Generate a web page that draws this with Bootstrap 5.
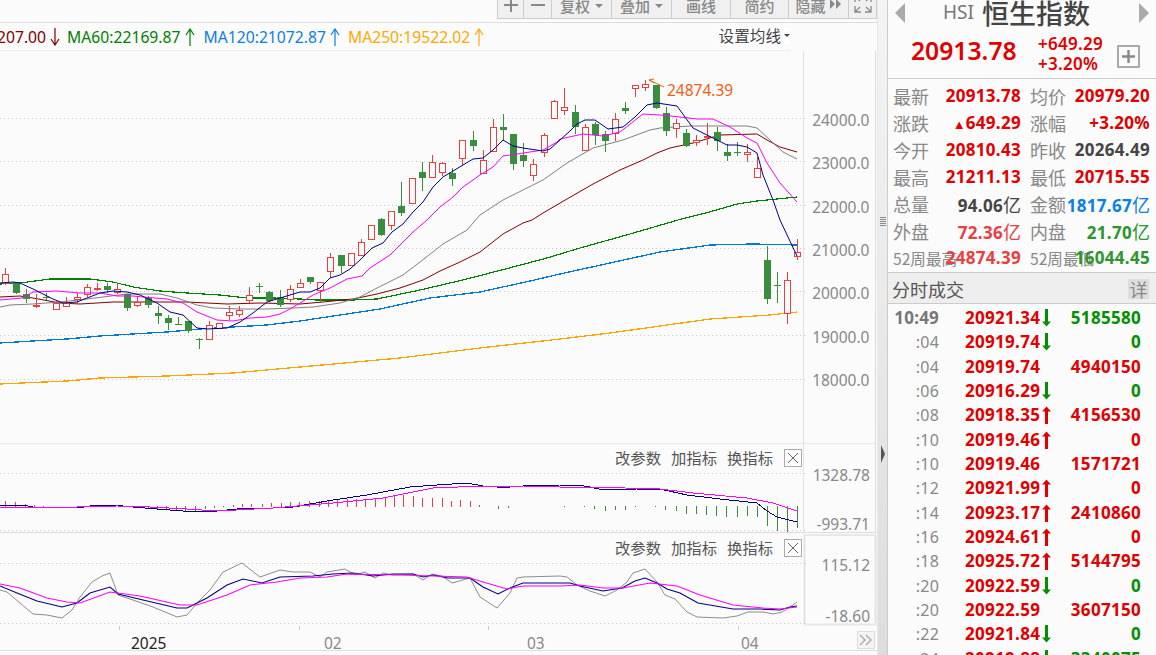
<!DOCTYPE html>
<html lang="zh">
<head>
<meta charset="utf-8">
<title>恒生指数</title>
<link href="https://cdn.jsdelivr.net/npm/bootstrap@5.3.0/dist/css/bootstrap.min.css" rel="stylesheet">
<style>
html,body{height:100%;overflow:hidden;background:#fbfbfb;}
body{font-family:"Noto Sans","Noto Sans CJK SC",sans-serif;font-size:16px;line-height:1;color:#444;}
.app{width:1156px;height:655px;overflow:hidden;}
.leftcol{width:877px;flex:none;height:655px;}
.topbar{height:22.5px;border-bottom:1px solid #ddd;overflow:hidden;align-items:flex-end;justify-content:flex-end;padding-bottom:3px;flex:none;}
.tbtn{height:32px;background:#f0f0f0;border:1px solid #ccc;border-left:0;color:#888;font-family:"Noto Sans CJK SC",sans-serif;font-size:15px;font-weight:500;display:flex;align-items:flex-end;justify-content:center;padding-bottom:5px;flex:none;}
.tbtn:first-child{border-left:1px solid #ccc;}
.caret-s{display:inline-block;border:4px solid transparent;border-top:4px solid #888;border-bottom:0;margin-left:5px;margin-bottom:5px;}
.legendrow{height:28px;width:791px;border-bottom:1px solid #eee;white-space:nowrap;flex:none;position:relative;padding-top:6px;}
.lgd{display:inline-flex;align-items:center;font-size:15.7px;height:17px;}
.lgd svg{margin-left:4px;}
.lgd-a{color:#800000;margin-left:-3px;margin-right:7px;}
.lgd-b{color:#008000;margin-right:9px;}
.lgd-c{color:#0a80e0;margin-right:8px;}
.lgd-d{color:#ffa800;}
.setma{position:absolute;right:1px;top:5px;background:#fff;color:#444;font-family:"Noto Sans CJK SC",sans-serif;font-size:15.6px;padding:0 0 1px;display:flex;align-items:center;}
.setma i{display:inline-block;border:3px solid transparent;border-top:3px solid #444;border-bottom:0;margin-left:3px;}
.pane{position:relative;flex:none;width:877px;}
.pane svg{display:block;}
.pane-main{height:392px;}
.pane-macd{height:90px;}
.pane-kdj{height:93px;}
.pane-axis{height:25px;border-bottom:1px solid #ddd;}
.ptools{position:absolute;top:6px;left:615px;display:flex;align-items:center;gap:10px;font-family:"Noto Sans CJK SC",sans-serif;font-size:15.33px;color:#555;}
.ptools .xbox{width:18px;height:18px;border:1px solid #aaa;margin-left:1px;background:#fdfdfd;display:flex;align-items:center;justify-content:center;}
.morebtn{position:absolute;left:857px;top:5px;width:18px;height:18px;background:#f4f4f4;border:1px solid #ddd;display:flex;align-items:center;justify-content:center;}
.splitter{width:10px;flex:none;height:655px;background:linear-gradient(#f4f4f4,#ddd);border-left:1px solid #e8e8e8;position:relative;}
.grip{position:absolute;left:2px;top:217px;width:6px;height:10px;background:repeating-linear-gradient(#888 0 1px,#eee 1px 2px);}
.tri{position:absolute;left:3px;top:445px;border:9px solid transparent;border-left:4px solid #555;border-right:0;}
.side{width:269px;flex:none;height:655px;border-left:1px solid #ccc;overflow:hidden;}
.sd-head{height:29px;position:relative;padding-left:55px;padding-bottom:4px;align-items:center;}
.sd-head .code{font-size:19px;color:#777;width:39px;}
.sd-head .nm{font-family:"Noto Sans CJK SC",sans-serif;font-size:27px;font-weight:500;color:#444;}
.tl,.tr{position:absolute;top:3px;border:10px solid transparent;}
.tl{left:7px;border-right:10px solid #aaa;border-left:0;}
.tr{left:251px;border-left:10px solid #aaa;border-right:0;}
.quote{height:50px;border-bottom:1px solid #ccc;position:relative;flex:none;}
.bigp{position:absolute;left:23px;top:10px;font-size:24.7px;font-weight:600;color:#e00000;}
.chg{position:absolute;left:150px;top:5px;font-size:17px;font-weight:600;color:#e00000;line-height:20px;letter-spacing:.3px;}
.plusb{position:absolute;left:229px;top:16px;width:23px;height:23px;border:2px solid #aaa;border-radius:1px;display:flex;align-items:center;justify-content:center;}
.stats{height:194px;border-bottom:1px solid #ccc;padding-top:5px;flex:none;}
.strow{height:27px;position:relative;font-family:"Noto Sans CJK SC",sans-serif;}
.lab{position:absolute;top:3px;font-size:18px;color:#888;white-space:nowrap;}
.lab.a1{left:5px;}.lab.a2{left:142px;}
.lab.sm{font-size:15.6px;top:5px;}
.val{position:absolute;top:3px;font-family:"Noto Sans",sans-serif;font-size:17px;font-weight:700;letter-spacing:.3px;white-space:nowrap;text-align:right;}
.val.v1{right:135px;}.val.v2{right:6px;}
.val small{font-family:"Noto Sans CJK SC",sans-serif;font-size:18px;font-weight:400;letter-spacing:0;}
.val .tg{font-size:13px;}
.cr{color:#e00000;}.cd{color:#444;}.cb{color:#0a80e0;}.cs{color:#e84040;}.cg{color:#2c962c;}.cG{color:#009000;}
.fshead{height:31px;background:#eee;border-bottom:1px solid #ccc;flex:none;align-items:center;padding-left:4px;padding-top:1px;position:relative;font-family:"Noto Sans CJK SC",sans-serif;font-size:18px;color:#555;}
.xq{position:absolute;left:240px;top:6px;width:21px;height:20px;background:#ddd;color:#888;font-size:18px;display:flex;align-items:center;justify-content:center;}
.trades{padding-top:2px;}
.trow{height:24.35px;position:relative;font-size:17px;font-weight:700;letter-spacing:.3px;white-space:nowrap;}
.trow .t{position:absolute;right:217px;top:4px;font-size:16px;font-weight:400;color:#888;letter-spacing:.2px;}
.trow .t.b{font-size:17px;font-weight:700;color:#777;top:3px;}
.trow .p{position:absolute;left:77px;top:3px;}
.trow .ar{position:absolute;left:154px;top:3px;}
.trow .v{position:absolute;right:15px;top:3px;}
</style>
</head>
<body>
<svg width="0" height="0" class="position-absolute">
<symbol id="up" viewBox="0 0 9 18"><path d="M4.5 0.5L9 5.5H6V18H3V5.5H0Z" fill="#e00000"/></symbol>
<symbol id="dn" viewBox="0 0 9 18"><path d="M4.5 17.5L9 12.5H6V0H3V12.5H0Z" fill="#009000"/></symbol>
<symbol id="thinup" viewBox="0 0 10 18"><path d="M5 1V18M1 7L5 1L9 7" fill="none" stroke="currentColor" stroke-width="1.2"/></symbol>
<symbol id="thindn" viewBox="0 0 10 18"><path d="M5 0V17M1 11L5 17L9 11" fill="none" stroke="currentColor" stroke-width="1.2"/></symbol>
<symbol id="xmark" viewBox="0 0 12 12"><path d="M1 1L11 11M11 1L1 11" stroke="#666" stroke-width="1"/></symbol>
</svg>
<div class="app d-flex">
  <div class="leftcol d-flex flex-column">
    <div class="topbar d-flex">
      <div class="tbtn" style="width:27px"><svg width="16" height="16" viewBox="0 0 16 16"><path d="M8 1V15M1 8H15" stroke="#888" stroke-width="2"/></svg></div>
      <div class="tbtn" style="width:28px"><svg width="16" height="16" viewBox="0 0 16 16"><path d="M1 8H15" stroke="#888" stroke-width="2"/></svg></div>
      <div class="tbtn" style="width:60px">复权<span class="caret-s"></span></div>
      <div class="tbtn" style="width:60px">叠加<span class="caret-s"></span></div>
      <div class="tbtn" style="width:59px">画线</div>
      <div class="tbtn" style="width:58px">简约</div>
      <div class="tbtn" style="width:60px">隐藏<svg width="12" height="10" viewBox="0 0 12 10" class="ms-1 mb-1"><path d="M0 0L5 5L0 10ZM6 0L11 5L6 10Z" fill="#888"/></svg></div>
      <div class="tbtn" style="width:28px"><svg width="18" height="18" viewBox="0 0 18 18"><path d="M1 7V1H7M11 1H17V7M17 11V17H11M7 17H1V11M1 1L6 6M17 1L12 6M17 17L12 12M1 17L6 12" fill="none" stroke="#888" stroke-width="1.3"/></svg></div>
    </div>
    <div class="legendrow">
      <span class="lgd lgd-a">207.00<svg width="10" height="18"><use href="#thindn"/></svg></span><span class="lgd lgd-b">MA60:22169.87<svg width="10" height="18"><use href="#thinup"/></svg></span><span class="lgd lgd-c">MA120:21072.87<svg width="10" height="18"><use href="#thinup"/></svg></span><span class="lgd lgd-d">MA250:19522.02<svg width="10" height="18"><use href="#thinup"/></svg></span>
      <span class="setma">设置均线<i></i></span>
    </div>
    <div class="pane pane-main" id="pMain"></div>
    <div class="pane pane-macd" id="pMacd">
      <div class="ptools"><span>改参数</span><span>加指标</span><span>换指标</span><span class="xbox"><svg width="12" height="12"><use href="#xmark"/></svg></span></div>
    </div>
    <div class="pane pane-kdj" id="pKdj">
      <div class="ptools"><span>改参数</span><span>加指标</span><span>换指标</span><span class="xbox"><svg width="12" height="12"><use href="#xmark"/></svg></span></div>
    </div>
    <div class="pane pane-axis" id="pAxis">
      <div class="morebtn"><svg width="14" height="12" viewBox="0 0 14 12"><path d="M1 1L6 6L1 11M7 1L12 6L7 11" fill="none" stroke="#aaa" stroke-width="1.4"/></svg></div>
    </div>
  </div>
  <div class="splitter"><span class="grip"></span><span class="tri"></span></div>
  <div class="side d-flex flex-column">
    <div class="sd-head d-flex"><span class="tl"></span><span class="code">HSI</span><span class="nm">恒生指数</span><span class="tr"></span></div>
    <div class="quote">
      <div class="bigp">20913.78</div>
      <div class="chg">+649.29<br>+3.20%</div>
      <div class="plusb"><svg width="15" height="15" viewBox="0 0 15 15"><path d="M7.5 1V14M1 7.5H14" stroke="#888" stroke-width="2.4"/></svg></div>
    </div>
    <div class="stats">
      <div class="strow"><span class="lab a1">最新</span><span class="val v1 cr">20913.78</span><span class="lab a2">均价</span><span class="val v2 cr">20979.20</span></div>
      <div class="strow"><span class="lab a1">涨跌</span><span class="val v1 cr"><span class="tg">▲</span>649.29</span><span class="lab a2">涨幅</span><span class="val v2 cr">+3.20%</span></div>
      <div class="strow"><span class="lab a1">今开</span><span class="val v1 cr">20810.43</span><span class="lab a2">昨收</span><span class="val v2 cd">20264.49</span></div>
      <div class="strow"><span class="lab a1">最高</span><span class="val v1 cr">21211.13</span><span class="lab a2">最低</span><span class="val v2 cr">20715.55</span></div>
      <div class="strow"><span class="lab a1">总量</span><span class="val v1 cd">94.06<small>亿</small></span><span class="lab a2">金额</span><span class="val v2 cb">1817.67<small>亿</small></span></div>
      <div class="strow"><span class="lab a1">外盘</span><span class="val v1 cs">72.36<small>亿</small></span><span class="lab a2">内盘</span><span class="val v2 cg">21.70<small>亿</small></span></div>
      <div class="strow"><span class="lab a1 sm">52周最高</span><span class="val v1 cs">24874.39</span><span class="lab a2 sm">52周最低</span><span class="val v2 cg">16044.45</span></div>
    </div>
    <div class="fshead d-flex">分时成交<span class="xq">详</span></div>
    <div class="trades">
      <div class="trow"><span class="t b">10:49</span><span class="p cr">20921.34</span><svg class="ar" width="9" height="18"><use href="#dn"/></svg><span class="v cG">5185580</span></div>
      <div class="trow"><span class="t">:04</span><span class="p cr">20919.74</span><svg class="ar" width="9" height="18"><use href="#dn"/></svg><span class="v cG">0</span></div>
      <div class="trow"><span class="t">:04</span><span class="p cr">20919.74</span><span class="v cr">4940150</span></div>
      <div class="trow"><span class="t">:06</span><span class="p cr">20916.29</span><svg class="ar" width="9" height="18"><use href="#dn"/></svg><span class="v cG">0</span></div>
      <div class="trow"><span class="t">:08</span><span class="p cr">20918.35</span><svg class="ar" width="9" height="18"><use href="#up"/></svg><span class="v cr">4156530</span></div>
      <div class="trow"><span class="t">:10</span><span class="p cr">20919.46</span><svg class="ar" width="9" height="18"><use href="#up"/></svg><span class="v cr">0</span></div>
      <div class="trow"><span class="t">:10</span><span class="p cr">20919.46</span><span class="v cr">1571721</span></div>
      <div class="trow"><span class="t">:12</span><span class="p cr">20921.99</span><svg class="ar" width="9" height="18"><use href="#up"/></svg><span class="v cr">0</span></div>
      <div class="trow"><span class="t">:14</span><span class="p cr">20923.17</span><svg class="ar" width="9" height="18"><use href="#up"/></svg><span class="v cr">2410860</span></div>
      <div class="trow"><span class="t">:16</span><span class="p cr">20924.61</span><svg class="ar" width="9" height="18"><use href="#up"/></svg><span class="v cr">0</span></div>
      <div class="trow"><span class="t">:18</span><span class="p cr">20925.72</span><svg class="ar" width="9" height="18"><use href="#up"/></svg><span class="v cr">5144795</span></div>
      <div class="trow"><span class="t">:20</span><span class="p cr">20922.59</span><svg class="ar" width="9" height="18"><use href="#dn"/></svg><span class="v cG">0</span></div>
      <div class="trow"><span class="t">:20</span><span class="p cr">20922.59</span><span class="v cr">3607150</span></div>
      <div class="trow"><span class="t">:22</span><span class="p cr">20921.84</span><svg class="ar" width="9" height="18"><use href="#dn"/></svg><span class="v cG">0</span></div>
      <div class="trow"><span class="t">:24</span><span class="p cr">20919.88</span><svg class="ar" width="9" height="18"><use href="#dn"/></svg><span class="v cG">3340075</span></div>
    </div>
  </div>
</div>
<script src="https://cdn.jsdelivr.net/npm/bootstrap@5.3.0/dist/js/bootstrap.bundle.min.js"></script>
<script>
const R='#e84040',G='#388e3c';
const C=[[5,268,274,283,285,'r'],[16,282,282,293,294,'g'],[26,289,294,299,303,'g'],[36,294,305,306,308,'r'],[46,293,297,298,300,'g'],[56,301,303,309,309,'r'],[66,297,303,306,306,'r'],[77,293,297,299,303,'r'],[87,284,287,294,297,'r'],[97,283,288,289,291,'r'],[107,283,286,290,293,'g'],[117,284,289,292,294,'r'],[127,294,294,308,311,'g'],[137,297,302,305,307,'r'],[148,296,298,305,308,'g'],[158,306,313,316,324,'g'],[168,315,318,323,330,'g'],[178,317,324,325,325,'g'],[188,321,321,331,333,'g'],[199,338,339,340,349,'g'],[209,321,325,339,339,'r'],[219,323,323,328,328,'r'],[229,306,312,315,320,'r'],[239,306,310,314,317,'r'],[249,287,295,300,303,'r'],[259,283,286,287,293,'g'],[269,291,292,301,302,'g'],[280,290,297,305,307,'g'],[290,285,289,299,302,'r'],[300,279,283,287,287,'r'],[310,277,277,282,284,'g'],[320,282,282,290,302,'r'],[330,253,257,271,278,'r'],[341,255,255,266,273,'g'],[351,253,253,265,265,'r'],[361,239,242,255,256,'r'],[371,225,225,239,239,'r'],[381,218,219,235,236,'g'],[391,211,211,225,230,'r'],[401,182,206,213,216,'g'],[412,178,178,203,203,'r'],[422,162,172,178,191,'g'],[432,155,162,177,178,'r'],[442,162,163,172,176,'r'],[452,168,173,179,186,'g'],[462,140,140,158,165,'r'],[473,131,140,146,151,'g'],[483,150,160,173,173,'r'],[493,119,127,151,151,'r'],[503,114,127,130,141,'g'],[513,134,134,164,170,'g'],[523,143,155,161,167,'g'],[533,159,164,175,181,'r'],[544,133,135,152,157,'r'],[554,100,101,118,118,'r'],[564,88,107,110,115,'r'],[575,105,112,127,134,'g'],[585,124,127,150,151,'r'],[595,122,124,135,145,'g'],[605,131,134,141,152,'g'],[615,113,119,133,141,'r'],[625,102,108,111,114,'g'],[635,85,85,88,97,'r'],[645,80,84,87,91,'r'],[656,85,85,108,109,'g'],[666,107,113,131,136,'g'],[676,119,123,128,138,'r'],[686,129,133,146,147,'g'],[696,135,140,142,146,'r'],[707,123,136,137,145,'r'],[717,127,132,141,151,'g'],[727,144,152,156,161,'g'],[737,142,152,153,156,'g'],[747,144,152,154,162,'r'],[757,157,168,177,177,'r'],[767,246,260,299,304,'g'],[777,272,285,286,303,'g'],[787,272,280,313,324,'r'],[797,239,252,256,260,'r']];
const L={
ma5:[0,283,13,282,20,283,33,289,43,294,53,299,63,303,77,302,87,298,100,293,113,291,127,292,140,295,157,303,170,312,183,315,197,328,207,329,227,328,240,322,253,313,267,302,280,298,290,295,300,292,310,292,320,288,330,278,340,275,350,269,360,260,372,248,383,243,392,232,403,224,413,212,423,202,433,187,443,177,453,171,473,159,483,158,493,150,503,140,513,146,523,148,543,151,550,149,560,140,570,131,577,124,585,120,595,120,608,129,623,127,635,117,647,105,657,103,677,106,693,128,713,138,727,145,737,145,747,147,757,153,763,175,773,200,780,220,797,256],
ma10:[0,300,22,298,33,292,57,291,80,293,100,293,117,296,133,296,143,297,167,299,183,303,197,312,217,320,233,321,250,318,267,317,280,314,290,309,300,303,313,295,330,288,347,279,362,276,370,268,390,255,402,243,413,232,427,220,440,207,453,197,463,187,480,175,493,167,503,156,517,154,543,150,557,142,560,139,583,134,603,136,620,132,643,114,660,115,680,117,697,119,713,119,730,127,747,138,757,143,767,163,780,183,797,202],
ma20:[0,307,10,305,33,304,60,302,87,299,103,297,127,294,160,294,177,298,197,305,213,308,240,309,267,309,293,308,313,307,340,303,360,297,377,288,403,275,420,262,443,244,467,230,480,215,503,200,523,190,543,180,567,163,593,148,623,140,650,130,660,128,690,126,747,126,757,128,770,140,783,152,797,159],
ma30:[0,297,20,296,33,298,60,303,80,304,113,302,153,302,187,302,227,304,260,303,300,304,323,302,353,299,377,294,400,288,423,280,440,271,460,262,480,252,503,234,523,223,532,220,543,213,567,199,593,184,620,170,643,160,657,153,670,148,693,143,720,135,757,134,767,140,780,147,797,152],
ma60:[0,284,20,283,50,279,90,279,113,282,133,287,160,291,187,293,220,295,247,298,273,298,300,299,317,300,353,300,377,299,420,290,467,279,513,267,547,258,580,248,630,234,678,220,713,211,737,204,757,201,797,197],
ma120:[0,343,33,341,67,339,100,336,133,334,167,332,200,329,233,327,267,325,300,321,340,315,380,309,430,298,480,292,530,281,560,274,610,263,660,252,710,245,753,244,797,245],
ma250:[0,384,67,381,100,378,167,376,233,373,300,367,400,358,480,348,560,339,610,333,660,326,710,319,770,315,797,312]};
const P=a=>{let s='';for(let i=0;i<a.length;i+=2)s+=a[i]+','+a[i+1]+' ';return s;};
const line=(a,c,w,extra)=>`<polyline points="${P(a)}" fill="none" stroke="${c}" stroke-width="${w}" ${extra||''}/>`;
const grid=(y,x2)=>`<line x1="0" x2="${x2||803}" y1="${y}" y2="${y}" stroke="#c9c9c9" stroke-dasharray="1 3"/>`;
const txt=(x,y,s,c,anc,sz,ext)=>`<text x="${x}" y="${y}" fill="${c}" text-anchor="${anc||'end'}" font-size="${sz||15.5}" font-family="Noto Sans,sans-serif" ${ext||''}>${s}</text>`;
const svg=(id,y,h,inner)=>{document.getElementById(id).insertAdjacentHTML('afterbegin',`<svg width="877" height="${h}" viewBox="0 ${y} 877 ${h}">${inner}</svg>`);};
const vline=(a,b)=>`<line x1="803.5" x2="803.5" y1="${a}" y2="${b}" stroke="#e2e2e2"/><line x1="875.5" x2="875.5" y1="${a}" y2="${b}" stroke="#dcdcdc"/>`;
const CR='shape-rendering="crispEdges"';
/* main */
let m=vline(51,443);
[[118.5,'24000.0',125.5],[161.5,'23000.0',169],[205.5,'22000.0',212.5],[248.5,'21000.0',256],[291.5,'20000.0',299],[335.5,'19000.0',342.5],[379.5,'18000.0',385.5]].forEach(g=>{m+=grid(g[0],808)+txt(869.5,g[2],g[1],'#888');});
m+=line(L.ma250,'#ffa500',1.3,CR)+line(L.ma120,'#0078d7',1.3,CR)+line(L.ma60,'#008000',1.2,CR)+line(L.ma30,'#800000',1)+line(L.ma20,'#808080',1);
C.forEach(c=>{const x=c[0]+.5,col=c[5]=='r'?R:G;
 let s=`<g ${CR}><line x1="${x}" x2="${x}" y1="${c[1]}" y2="${c[2]}" stroke="${col}"/><line x1="${x}" x2="${x}" y1="${c[3]}" y2="${c[4]}" stroke="${col}"/>`;
 if(c[5]=='r') s+=`<rect x="${x-3}" y="${c[2]+.5}" width="6" height="${c[3]-c[2]}" fill="#fbfbfb" stroke="${col}"/>`;
 else s+=`<rect x="${x-3.5}" y="${c[2]}" width="7" height="${Math.max(c[3]-c[2],1)}" fill="${col}"/>`;
 m+=s+'</g>';});
m+=line(L.ma10,'#ff00ff',1)+line(L.ma5,'#000080',1);
m+=`<path d="M649 80L664 87M649 80L654 79M649 80L654 83" stroke="#f06010" fill="none"/>`+txt(667,96,'24874.39','#f06010','start',15.5);
svg('pMain',51,392,m);
/* macd */
let h=vline(443,533)+`<line x1="0" x2="877" y1="443.5" y2="443.5" stroke="#e8e8e8"/><line x1="0" x2="877" y1="533" y2="533" stroke="#ddd" stroke-width="2"/>`+grid(473.5,808)+grid(530.5,808)+txt(870,481,'1328.78','#888')+txt(870,530,'-993.71','#888');
const HR=[[5,501],[15,502],[25,504],[34,505],[43,506],[233,505],[242,504],[251,504],[262,504],[271,503],[281,503],[290,502],[299,502],[309,501],[319,501],[328,501],[337,500],[347,499],[356,499],[365,499],[375,498],[385,497],[394,496],[403,495],[413,496],[422,498],[432,498],[442,498],[451,501],[460,500],[470,501],[479,505],[564,506]];
const HG=[[138,507],[148,508],[157,509],[166,510],[176,511],[185,512],[195,511],[205,509],[214,508],[223,507],[498,509],[508,508],[584,507],[594,509],[605,511],[615,510],[625,510],[635,507],[655,507],[665,510],[676,511],[686,514],[696,514],[706,515],[716,516],[726,517],[737,517],[747,516],[757,517],[767,526],[777,531],[787,532],[797,528]];
h+=`<g ${CR}>`;
HR.forEach(b=>{h+=`<line x1="${b[0]+.5}" x2="${b[0]+.5}" y1="${b[1]}" y2="507" stroke="${R}"/>`;});
HG.forEach(b=>{h+=`<line x1="${b[0]+.5}" x2="${b[0]+.5}" y1="506" y2="${b[1]}" stroke="${G}"/>`;});
h+='</g>';
h+=line([0,505,23,505,33,507,57,507,77,508,97,505,113,505,133,507,157,509,183,511,217,511,237,509,273,508,293,507,333,500,367,495,410,487,437,485,467,483,483,486,497,487,510,487,523,486,560,485,577,485,590,487,603,490,637,489,660,489,687,495,720,499,757,503,767,511,777,517,797,522],'#000080',1,CR);
h+=line([0,508,17,507,77,507,117,506,150,507,187,509,217,511,273,508,333,503,383,498,433,488,483,486,523,486,560,487,590,487,660,489,693,493,747,498,773,503,797,511],'#ff00ff',1,CR);
svg('pMacd',443,90,h);
/* kdj */
let k=`<line x1="804.5" x2="804.5" y1="534" y2="625" stroke="#e2e2e2" stroke-width="2"/><line x1="875.5" x2="875.5" y1="534" y2="625" stroke="#e2e2e2" stroke-width="2"/><line x1="804" x2="876" y1="535" y2="535" stroke="#e8e8e8" stroke-width="2"/><line x1="804" x2="876" y1="624.5" y2="624.5" stroke="#e8e8e8" stroke-width="2"/>`+grid(563.5,808)+grid(623.5,808)+txt(870,571,'115.12','#888')+txt(870,622,'-18.60','#888');
const gx=[0,590,7,592,20,603,33,614,47,615,62,618,72,610,80,597,92,582,102,576,110,573,118,595,133,600,153,607,177,617,187,615,197,603,210,590,223,572,242,563,260,577,280,570,293,572,310,572,320,577,327,572,345,569,355,575,365,572,375,578,383,573,393,575,413,574,423,580,432,574,442,576,452,583,470,578,480,597,497,608,510,593,517,578,523,577,560,576,567,577,577,585,590,591,605,596,617,590,627,582,633,573,645,569,657,582,665,595,675,599,687,612,697,617,723,618,737,616,748,612,763,612,773,614,782,612,790,607,797,602];
const kx=[0,586,17,593,37,601,62,607,77,603,90,593,110,587,118,594,143,600,177,608,187,608,207,598,227,585,243,579,262,583,280,577,313,576,333,574,353,573,373,576,393,574,413,574,423,577,433,575,448,578,470,578,483,587,498,594,510,588,523,583,560,583,570,583,580,586,603,591,622,588,635,581,645,578,657,583,667,589,680,593,698,603,733,609,760,609,780,610,790,607,797,606];
const dx=[0,584,20,588,47,598,67,602,80,603,110,592,140,596,180,605,197,605,227,595,250,585,277,582,300,578,327,577,347,574,400,575,467,577,483,582,507,589,523,586,560,586,580,585,603,588,623,588,650,583,677,586,700,595,733,605,763,608,780,609,797,607];
k+=line(gx,'#808080',.9)+line(kx,'#000080',1.05)+line(dx,'#ff00ff',1.05);
svg('pKdj',533,93,k);
/* axis */
let ax='';[119,299,488,738].forEach(x=>{ax+=`<line x1="${x+.5}" x2="${x+.5}" y1="626" y2="630" stroke="#ccc"/>`;});
ax+=txt(131,649,'2025','#222','start')+txt(324,649,'02','#888','start')+txt(527,649,'03','#888','start')+txt(741,649,'04','#888','start');
svg('pAxis',626,24,ax);
</script>
</body>
</html>
